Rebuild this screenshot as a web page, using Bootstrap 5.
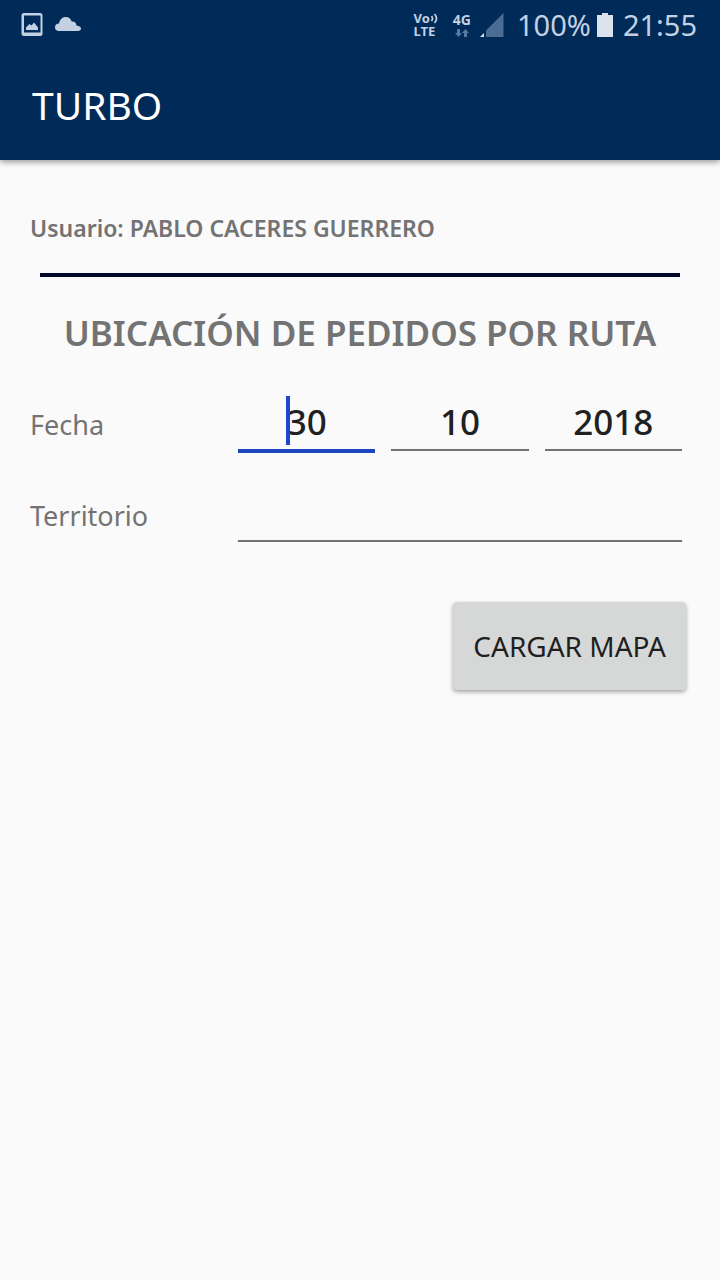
<!DOCTYPE html>
<html lang="es">
<head>
<meta charset="utf-8">
<meta name="viewport" content="width=device-width, initial-scale=1">
<title>TURBO</title>
<link href="https://cdn.jsdelivr.net/npm/bootstrap@5.3.0/dist/css/bootstrap.min.css" rel="stylesheet">
<style>
  body { font-family: "Noto Sans", "Open Sans", sans-serif; background: #fafafa; color: #737373; }
  .app-header { background: #002a57; box-shadow: 0 2px 6px rgba(0, 0, 0, .4); }
  .status-bar { height: 50px; padding: 0 23px 0 20px; color: #c3d1e3; font-size: 29px; line-height: 50px; }
  .status-tiny { font-size: 13px; line-height: 13px; font-weight: 700; }
  .net-type { font-size: 14px; margin: 0 8px 0 14px; }
  .battery-level { margin-left: 13px; }
  .battery-icon { margin: 0 10px 0 6px; }
  .toolbar { height: 110px; padding: 0 32px; }
  .toolbar h1 { font-size: 39px; line-height: 110px; font-weight: 400; color: #fff; }
  .content { padding: 50px 30px; }
  .user-line { font-size: 23px; line-height: 36px; font-weight: 600; }
  .rule { height: 4px; margin: 27px 10px 0; background: #000829; border: 0; opacity: 1; }
  .page-title { font-size: 35px; line-height: 48px; margin: 32px 0 0; font-weight: 600; }
  .form-rows { display: grid; row-gap: 31px; margin-top: 38px; }
  .field-row { display: grid; grid-template-columns: 192px 1fr; column-gap: 16px; padding-right: 8px; }
  .field-row label { font-size: 27px; line-height: 60px; }
  .line-input { height: 56px; padding: 0 0 2px; border: 0; border-bottom: 2px solid #737373; border-radius: 0; background: transparent; color: #212121; font-size: 35px; line-height: 50px; font-weight: 500; }
  .line-input:focus { background: transparent; color: #212121; box-shadow: none; border-color: #737373; }
  .line-input.active { height: 58px; border-bottom: 4px solid #1d46c1; }
  .caret-mark { left: calc(50% - 21px); top: 1px; width: 4px; height: 49px; background: #1c46d0; }
  .form-actions { margin: 56px 4px 0 0; }
  .btn-load { padding: 0 20px; height: 88px; border: 0; border-radius: 4px; background: #d6d8d7; color: #1f1f1f; font-size: 28px; box-shadow: 0 2px 4px rgba(0, 0, 0, .35); }
</style>
</head>
<body>
<header class="app-header">
  <div class="status-bar d-flex align-items-center">
    <svg width="24" height="26" viewBox="0 0 24 26" aria-hidden="true"><path fill="#c3d1e3" fill-rule="evenodd" d="M4 1h16a2.500 2.500 0 0 1 2.500 2.500v18a2.500 2.500 0 0 1-2.500 2.500H4a2.500 2.500 0 0 1-2.500-2.500v-18A2.500 2.500 0 0 1 4 1zM4 3.500v17h16.500v-17zM6 18v-2.500l3.500-3.500 2 1.500 2.500-3 2 2.500 2 2.500V18z"/></svg>
    <svg class="ms-2" width="30" height="18" viewBox="0 0 30 18" aria-hidden="true"><path fill="#c3d1e3" d="M7 15C4.500 15 3 13.500 3 11.500c0-2.500 1.500-4 4-4C8 3.500 10 1 13.500 1c3.500 0 5.500 2 6.200 4.500 3.300-.4 4.500 1.500 4.800 4 3 .5 4.500 1.500 4.500 3 0 1.600-1.200 2.500-3 2.500z"/></svg>
    <div class="status-tiny ms-auto"><div class="d-flex align-items-center">Vo<svg width="9" height="11" viewBox="0 0 9 11" aria-hidden="true"><g fill="none" stroke="#c3d1e3" stroke-width="1.700"><path d="M1.500 3q2 2.500 0 5M4.500 1q4 4.500 0 9"/></g></svg></div><div>LTE</div></div>
    <div class="status-tiny net-type text-center"><div>4G</div><svg class="d-block mx-auto" width="16" height="12" viewBox="0 0 16 12" aria-hidden="true"><path fill="#58789e" d="M3 3h3v4h2l-3.500 4L1 7h2zM10 11h3V7h2l-3.500-4L8 7h2z"/></svg></div>
    <svg width="25" height="26" viewBox="0 0 25 26" aria-hidden="true"><path fill="#4b6d94" d="M7 18.500 24.500 1v24H7z"/><path fill="#dbe5f0" d="M1 25l4-4v4z"/></svg>
    <span class="battery-level">100%</span>
    <svg class="battery-icon" width="16" height="24" viewBox="0 0 16 24" aria-hidden="true"><path fill="#dae2ed" d="M5 0h6v2h5v22H0V2h5z"/></svg>
    <time>21:55</time>
  </div>
  <div class="toolbar"><h1 class="m-0">TURBO</h1></div>
</header>
<main class="content">
  <p class="user-line m-0">Usuario: PABLO CACERES GUERRERO</p>
  <hr class="rule">
  <h2 class="page-title text-center">UBICACIÓN DE PEDIDOS POR RUTA</h2>
  <form>
    <div class="form-rows">
      <div class="field-row">
        <label for="day">Fecha</label>
        <div class="row row-cols-3 gx-3">
          <div class="col"><div class="position-relative"><input id="day" class="form-control line-input active text-center" value="30" inputmode="numeric"><span class="caret-mark position-absolute"></span></div></div>
          <div class="col"><input class="form-control line-input text-center" value="10" inputmode="numeric" aria-label="Mes"></div>
          <div class="col"><input class="form-control line-input text-center" value="2018" inputmode="numeric" aria-label="Año"></div>
        </div>
      </div>
      <div class="field-row">
        <label for="territory">Territorio</label>
        <input id="territory" class="form-control line-input">
      </div>
    </div>
    <div class="form-actions d-flex justify-content-end">
      <button type="button" class="btn btn-load">CARGAR MAPA</button>
    </div>
  </form>
</main>
<script src="https://cdn.jsdelivr.net/npm/bootstrap@5.3.0/dist/js/bootstrap.bundle.min.js"></script>
</body>
</html>
